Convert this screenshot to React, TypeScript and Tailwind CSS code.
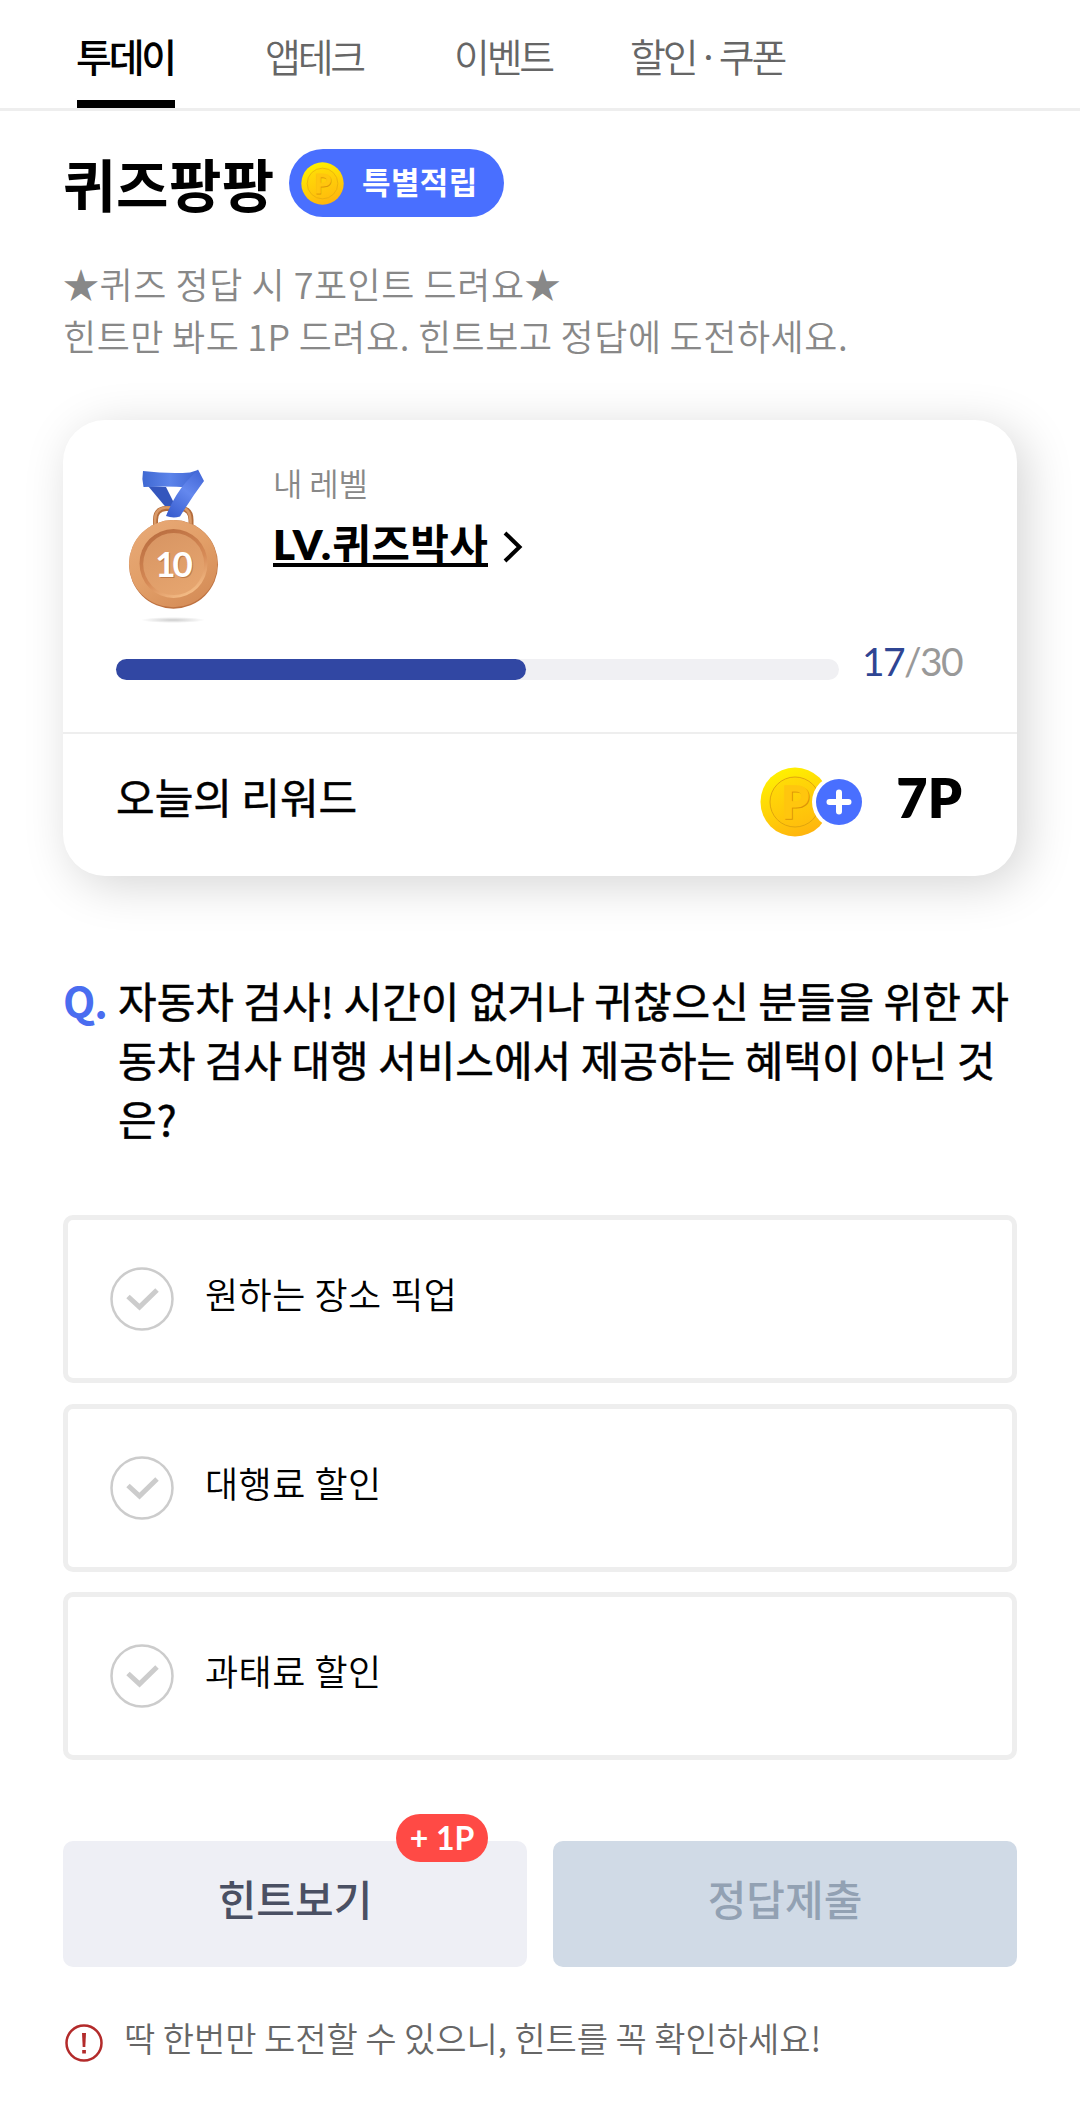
import React from "react";

const tabs = [
  { label: "투데이", active: true, cls: "w-[98px]" },
  { label: "앱테크", active: false, cls: "ml-[91px] w-[98px]" },
  { label: "이벤트", active: false, cls: "ml-[91px] w-[98px]" },
  { label: "할인 · 쿠폰", active: false, cls: "ml-[78px] w-[160px] [word-spacing:-3px]" },
];

const options = ["원하는 장소 픽업", "대행료 할인", "과태료 할인"];

function Coin({ className, id }: { className: string; id: string }) {
  return (
    <svg viewBox="0 0 70 70" className={className}>
      <defs>
        <linearGradient id={`${id}-face`} x1="0.3" y1="0" x2="0.7" y2="1">
          <stop offset="0" stopColor="#fff200" />
          <stop offset="0.5" stopColor="#ffd308" />
          <stop offset="1" stopColor="#ffb20e" />
        </linearGradient>
        <linearGradient id={`${id}-core`} x1="0.3" y1="0" x2="0.7" y2="1">
          <stop offset="0" stopColor="#ffdc06" />
          <stop offset="1" stopColor="#ffbd0c" />
        </linearGradient>
      </defs>
      <circle cx="35" cy="35" r="34.5" fill={`url(#${id}-face)`} />
      <circle cx="35" cy="35" r="25" fill={`url(#${id}-core)`} stroke="#e0a50e" strokeWidth="1" />
      <g fontFamily="Lato" fontWeight="700" fontSize="44" textAnchor="middle">
        <text x="36.2" y="51.6" fill="#dc9608" stroke="#dc9608" strokeWidth="1.6">P</text>
        <text x="35.2" y="50.8" fill="#ffc60e" stroke="#ffc60e" strokeWidth="1.6">P</text>
      </g>
    </svg>
  );
}

function Medal() {
  return (
    <svg viewBox="0 0 100 160" className="h-[160px] w-[100px]">
      <defs>
        <linearGradient id="m-rim" x1="0" y1="0" x2="0.7" y2="1">
          <stop offset="0" stopColor="#e8aa78" />
          <stop offset="0.55" stopColor="#e29f68" />
          <stop offset="1" stopColor="#d58d58" />
        </linearGradient>
        <linearGradient id="m-groove" x1="0.2" y1="0" x2="0.7" y2="1">
          <stop offset="0" stopColor="#b86c3f" />
          <stop offset="0.6" stopColor="#d68a56" />
          <stop offset="1" stopColor="#f6c08a" />
        </linearGradient>
        <linearGradient id="m-core" x1="0" y1="0" x2="0.5" y2="1">
          <stop offset="0" stopColor="#d79462" />
          <stop offset="1" stopColor="#e5a46e" />
        </linearGradient>
        <linearGradient id="m-band" x1="0" y1="0" x2="1" y2="0">
          <stop offset="0" stopColor="#4069d2" />
          <stop offset="0.5" stopColor="#5c84ea" />
          <stop offset="1" stopColor="#3f64d2" />
        </linearGradient>
        <linearGradient id="m-strap" x1="0.8" y1="0" x2="0.2" y2="1">
          <stop offset="0" stopColor="#4468d8" />
          <stop offset="0.45" stopColor="#6488ee" />
          <stop offset="1" stopColor="#3a5fd0" />
        </linearGradient>
        <radialGradient id="m-shadow">
          <stop offset="0" stopColor="#000" stopOpacity="0.2" />
          <stop offset="1" stopColor="#000" stopOpacity="0" />
        </radialGradient>
      </defs>
      <ellipse cx="49" cy="151" rx="32" ry="3" fill="url(#m-shadow)" />
      <path d="M24 17 L42 18 L50 34 L45 42 Z" fill="#3456bd" />
      <path d="M31.5 60 V51 Q31.5 40 42 39.5 H57 Q67 40 67 51 V60" fill="none" stroke="#b46c3b" strokeWidth="5" />
      <path d="M31 60 V51 Q31 39.5 42 38.5 H57 Q66 39.5 66.5 51 V60" fill="none" stroke="#d99a68" strokeWidth="2.5" />
      <path d="M19 2 Q44 5 66 3.5 L74 1 L66 18.5 Q44 17 19.5 18 Q17.5 10 19 2 Z" fill="url(#m-band)" />
      <path d="M74 0.5 L80 12 Q68 28 56 47.5 Q49 49.5 42 47 Q50 27 62 13 Z" fill="url(#m-strap)" />
      <ellipse cx="49.5" cy="95.4" rx="44.5" ry="44.3" fill="#bd7140" />
      <ellipse cx="49.2" cy="94.7" rx="44.2" ry="43.6" fill="url(#m-rim)" />
      <ellipse cx="49.5" cy="94.5" rx="34" ry="34.5" fill="url(#m-groove)" />
      <ellipse cx="49.7" cy="95" rx="30.5" ry="31" fill="url(#m-core)" />
      <text x="49.5" y="109" textAnchor="middle" fontFamily="Lato" fontWeight="700" fontSize="35" letterSpacing="-3" fill="#9a5528" opacity="0.5">10</text>
      <text x="48.5" y="108" textAnchor="middle" fontFamily="Lato" fontWeight="700" fontSize="35" letterSpacing="-3" fill="#fff">10</text>
    </svg>
  );
}

export default function App() {
  return (
    <div className="h-[2124px] w-[1080px] overflow-hidden bg-white font-['Noto_Sans_CJK_KR',sans-serif] text-black">
      <nav className="flex h-[111px] items-stretch border-b-[3px] border-[#eeeeee] pl-[77px]">
        {tabs.map((t) => (
          <div
            key={t.label}
            className={
              t.active
                ? `flex flex-col justify-between whitespace-nowrap pt-[35px] text-[39px] leading-[40px] font-medium tracking-[-3.2px] ${t.cls}`
                : `whitespace-nowrap pt-[35px] text-[39px] leading-[40px] font-[350] tracking-[-3.2px] text-[#666666] ${t.cls}`
            }
          >
            <span className="-ml-[1px]">{t.label}</span>
            {t.active && <span className="h-2 bg-black" />}
          </div>
        ))}
      </nav>

      <main className="px-[63px] pt-[38px]">
        <div className="flex h-[68px] items-center">
          <h1 className="mb-[2px] w-[226px] whitespace-nowrap text-[57px] leading-[65px] font-bold tracking-[0.5px]">퀴즈팡팡</h1>
          <div className="flex h-[68px] w-[215px] items-center rounded-full bg-[#496fff] pl-[12px]">
            <Coin className="size-[43px]" id="coin-s" />
            <span className="mb-[4px] ml-[18px] whitespace-nowrap text-[31px] leading-[60px] font-bold tracking-[0.4px] text-white">특별적립</span>
          </div>
        </div>

        <p className="mt-[40px] whitespace-nowrap text-[36px] leading-[52px] font-[350] tracking-[0.55px] text-[#888888]">
          ★퀴즈 정답 시 7포인트 드려요★
          <br />
          <span className="[word-spacing:-0.6px]">힌트만 봐도 1P 드려요. 힌트보고 정답에 도전하세요.</span>
        </p>

        <section className="mt-[59px] h-[456px] rounded-[42px] bg-white shadow-[9px_9px_48px_0px_rgba(0,0,0,0.17)]">
          <div className="h-[314px] border-b-2 border-[#eeeeee] px-[53px] pt-[49px]">
            <div className="flex h-[160px]">
              <div className="ml-[8px]">
                <Medal />
              </div>
              <div className="ml-[49px]">
                <p className="-mt-[1px] text-[32px] leading-[29px] font-[350] tracking-[-0.2px] text-[#888888]">내 레벨</p>
                <div className="mt-[20px] flex items-center">
                  <span className="h-[50px] border-b-[4px] border-black text-[42px] leading-[50px] font-bold tracking-[0.4px]">
                    <span className="font-['Lato'] font-extrabold tracking-[1.2px]">LV.</span>퀴즈박사
                  </span>
                  <svg viewBox="0 0 20 32" className="mt-[10px] ml-[15px] h-[32px] w-[20px]">
                    <path d="M2 2 L16.5 16 L2 30" fill="none" stroke="#000" strokeWidth="4" />
                  </svg>
                </div>
              </div>
            </div>
            <div className="mt-[8px] flex h-[49px] items-center justify-between">
              <div className="mt-[16px] h-[21px] w-[723px] rounded-full bg-[#f0f0f3]">
                <div className="h-full rounded-full bg-[#3147a3]" style={{ width: `${(17 / 30) * 100}%` }} />
              </div>
              <p className="mr-[2px] mb-[2px] whitespace-nowrap font-['Lato'] text-[39px] leading-[48px] tracking-[-1.6px] text-[#999999]">
                <span className="text-[#2f4593]">17</span>/30
              </p>
            </div>
          </div>
          <div className="flex h-[142px] items-center pr-[55px] pl-[53px]">
            <span className="mb-[18px] text-[42px] leading-[48px] font-normal [-webkit-text-stroke:0.5px_black]">오늘의 리워드</span>
            <div className="mb-[6px] ml-auto flex items-center">
              <Coin className="size-[70px]" id="coin-l" />
              <svg viewBox="0 0 54 54" className="-ml-[18px] size-[54px]">
                <circle cx="27" cy="27" r="27" fill="#fff" />
                <circle cx="27" cy="27" r="23" fill="#496fff" />
                <path d="M27 17.5 V36.5 M17.5 27 H36.5" stroke="#fff" strokeWidth="6" strokeLinecap="round" />
              </svg>
            </div>
            <span className="mb-[15px] ml-[29px] w-[67px] text-right font-['Lato'] text-[54px] leading-[60px] font-extrabold">7P</span>
          </div>
        </section>

        <section className="mt-[94px] flex h-[177px] text-[42px] leading-[59px]">
          <span className="w-[55px] font-bold tracking-[-1px] text-[#4a6df0]">Q.</span>
          <p className="whitespace-nowrap font-normal [-webkit-text-stroke:0.5px_black]">
            자동차 검사! 시간이 없거나 귀찮으신 분들을 위한 자
            <br />
            동차 검사 대행 서비스에서 제공하는 혜택이 아닌 것
            <br />
            은?
          </p>
        </section>

        <ul className="mt-[68px] flex flex-col gap-[20.5px]">
          {options.map((o) => (
            <li key={o} className="flex h-[168px] items-center rounded-[10px] border-[5px] border-[#eeeeee] pl-[42px]">
              <svg viewBox="0 0 64 64" className="size-[64px]">
                <circle cx="32" cy="32" r="30.5" fill="none" stroke="#cccccc" strokeWidth="2.5" />
                <path d="M18 29.5 L29.5 40 L47 23" fill="none" stroke="#cccccc" strokeWidth="5" />
              </svg>
              <span className="mb-[12px] ml-[31px] text-[36px] leading-[48px] font-[350] tracking-[0.5px]">{o}</span>
            </li>
          ))}
        </ul>

        <div className="mt-[81px] flex gap-[26px]">
          <button className="relative h-[126px] w-[464px] rounded-[10px] bg-[#eeeff5] pb-[13px] text-[42px] font-medium text-[#4a5063]">
            힌트보기
            <span className="absolute top-[-27px] left-[333px] flex h-[48px] w-[92px] items-center justify-center rounded-full bg-[#ff4a45] font-['Lato'] text-[32px] font-bold text-white">
              + 1P
            </span>
          </button>
          <button className="h-[126px] w-[464px] rounded-[10px] bg-[#d0dae6] pb-[13px] text-[42px] font-medium text-[#92a1b3]">정답제출</button>
        </div>

        <div className="mt-[45px] flex items-center">
          <svg viewBox="0 0 42 42" className="mt-[10px] size-[42px]">
            <circle cx="21" cy="21" r="17.5" fill="none" stroke="#b32b2b" strokeWidth="2.5" />
            <path d="M19 11 H23 L22.3 25 H19.7 Z" fill="#b32b2b" />
            <rect x="19.2" y="28" width="3.7" height="3.5" fill="#b32b2b" />
          </svg>
          <p className="ml-[19px] whitespace-nowrap text-[34px] leading-[40px] font-[350] tracking-[-0.05px] text-[#666666]">
            딱 한번만 도전할 수 있으니, 힌트를 꼭 확인하세요!
          </p>
        </div>
      </main>
    </div>
  );
}
